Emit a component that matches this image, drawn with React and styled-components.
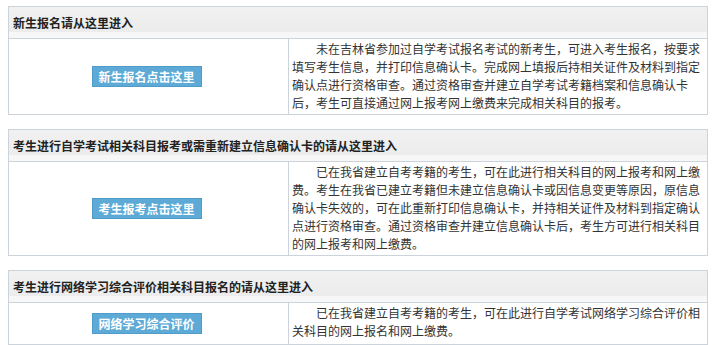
import React from 'react'
import styled, { createGlobalStyle } from 'styled-components'

const GlobalStyle = createGlobalStyle`
    body {
        margin: 0;
        background: #fff;
        font-family: "Microsoft YaHei", "Noto Sans CJK SC", "Noto Sans", sans-serif;
        font-size: 12px;
        color: #333;
    }
`

const sections = [
    {
        title: '新生报名请从这里进入',
        button: '新生报名点击这里',
        text: '未在吉林省参加过自学考试报名考试的新考生，可进入考生报名，按要求填写考生信息，并打印信息确认卡。完成网上填报后持相关证件及材料到指定确认点进行资格审查。通过资格审查并建立自学考试考籍档案和信息确认卡后，考生可直接通过网上报考网上缴费来完成相关科目的报考。'
    },
    {
        title: '考生进行自学考试相关科目报考或需重新建立信息确认卡的请从这里进入',
        button: '考生报考点击这里',
        text: '已在我省建立自考考籍的考生，可在此进行相关科目的网上报考和网上缴费。考生在我省已建立考籍但未建立信息确认卡或因信息变更等原因，原信息确认卡失效的，可在此重新打印信息确认卡，并持相关证件及材料到指定确认点进行资格审查。通过资格审查并建立信息确认卡后，考生方可进行相关科目的网上报考和网上缴费。'
    },
    {
        title: '考生进行网络学习综合评价相关科目报名的请从这里进入',
        button: '网络学习综合评价',
        text: '已在我省建立自考考籍的考生，可在此进行自学考试网络学习综合评价相关科目的网上报名和网上缴费。'
    }
]

const App = () => {
    return (
        <Page>
            <GlobalStyle />
            {sections.map(item => (
                <Panel key={item.button}>
                    <Header>{item.title}</Header>
                    <Body>
                        <ButtonCell>
                            <EnterButton>{item.button}</EnterButton>
                        </ButtonCell>
                        <TextCell>{item.text}</TextCell>
                    </Body>
                </Panel>
            ))}
        </Page>
    )
}

const Page = styled.div`
    display: flex;
    flex-direction: column;
    gap: 14px;
    padding: 6px 8px;
`
const Panel = styled.div`
    border: 1px solid #ccd3da;
    background: #fff;
`
const Header = styled.div`
    height: 31px;
    display: flex;
    align-items: center;
    padding-left: 4px;
    font-weight: bold;
    font-size: 12px;
    color: #222;
    background: linear-gradient(#f1f1f1 0%, #ececec 80%, #f7f7f7 81%, #f7f7f7 100%);
    border-bottom: 1px solid #ccd3da;
`
const Body = styled.div`
    display: grid;
    grid-template-columns: 280px 1fr;
`
const ButtonCell = styled.div`
    display: flex;
    align-items: center;
    justify-content: center;
    padding: 10px 4px 10px 0;
    border-right: 1px solid #ccd3da;
`
const EnterButton = styled.div`
    width: 108px;
    height: 19px;
    line-height: 19px;
    text-align: center;
    font-weight: bold;
    font-size: 12px;
    color: #fff;
    background: #5daad6;
    border: 1px solid #4f9bc9;
    cursor: pointer;
`
const TextCell = styled.div`
    padding: 1px 6px 2px 3px;
    line-height: 18px;
    text-indent: 2em;
    text-align: left;
    color: #333;
`

export default App
